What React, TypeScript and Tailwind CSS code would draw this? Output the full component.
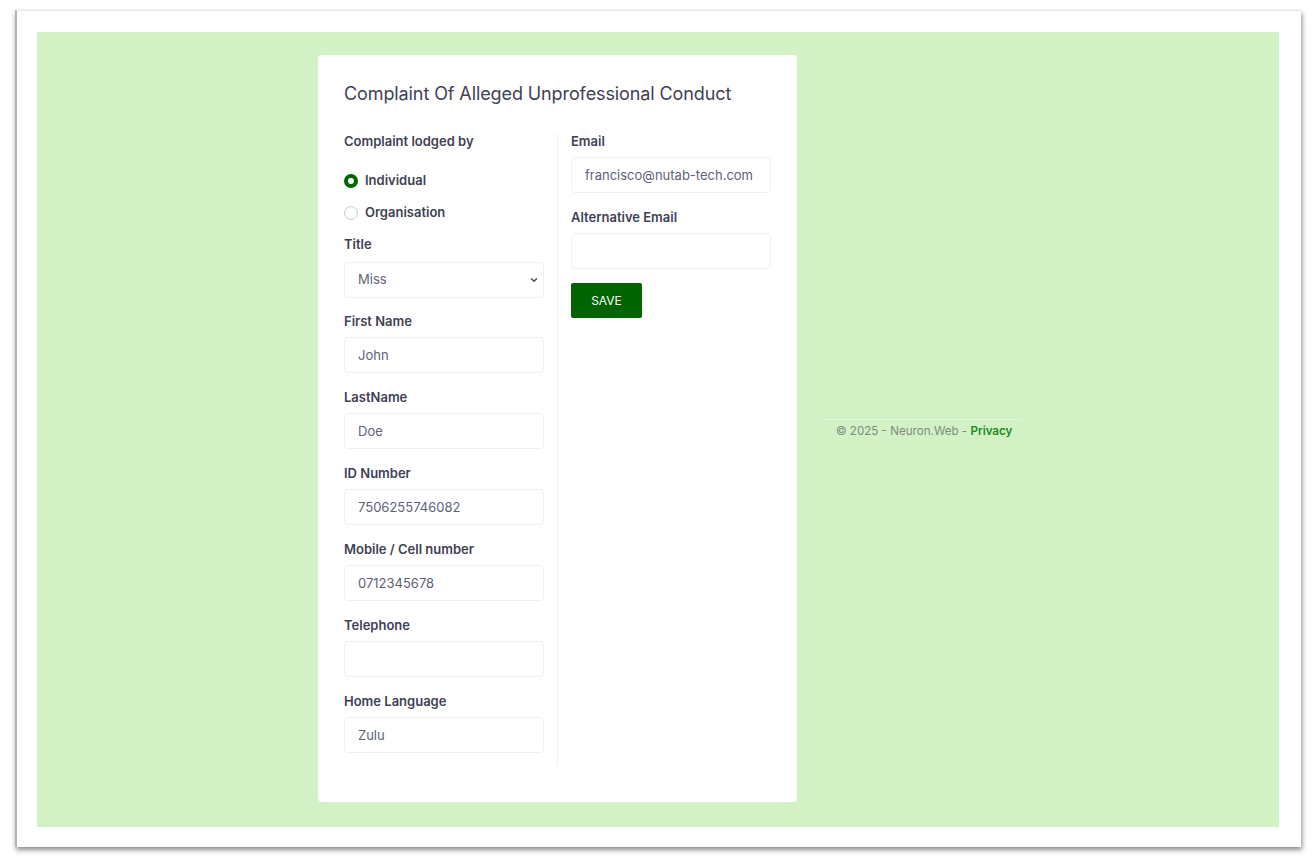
import React, { useState } from 'react';

const Field: React.FC<{ label: string; value?: string }> = ({ label, value = '' }) => (
  <div className="mb-4">
    <label className="block text-[13px] leading-[17px] font-semibold text-[#3f4254] mb-[7px]">{label}</label>
    <input
      type="text"
      defaultValue={value}
      className="w-full h-9 px-[13px] rounded-[4px] border border-[#eef0f6] bg-white text-[13px] text-[#5e6278] outline-none"
    />
  </div>
);

const Radio: React.FC<{ checked: boolean; label: string; onClick: () => void }> = ({ checked, label, onClick }) => (
  <button type="button" onClick={onClick} className="flex items-center gap-[7px] h-5">
    {checked ? (
      <span className="w-[14px] h-[14px] rounded-full border-[4px] border-[#006400] bg-white" />
    ) : (
      <span className="w-[14px] h-[14px] rounded-full border border-[#c9ccd4] bg-white" />
    )}
    <span className="text-[13px] font-semibold text-[#3f4254]">{label}</span>
  </button>
);

const App: React.FC = () => {
  const [lodgedBy, setLodgedBy] = useState<'individual' | 'organisation'>('individual');

  return (
    <div className="w-full h-[868px] bg-white pt-[10px] pl-[15px]" style={{ fontFamily: 'Inter, "Noto Sans", sans-serif' }}>
      {/* Screenshot frame */}
      <div className="w-[1286px] h-[837px] bg-white pl-[20px] pr-[21px] py-[21px] border-t border-[#e6e6e6] border-l-2 border-l-[#b5b5b5] shadow-[1px_3px_5px_rgba(0,0,0,0.45)]">
        <div className="w-[1242px] h-[795px] bg-[#d2f1c4] flex items-start pl-[281px] gap-[26px]">
          {/* Card */}
          <div className="mt-[23px] w-[479px] bg-white rounded-[4px] px-[26px] pt-[28px] pb-[37px]">
            <h1 className="text-[18px] leading-[22px] text-[#3f4254] font-normal tracking-[-0.1px]">
              Complaint Of Alleged Unprofessional Conduct
            </h1>

            <div className="flex mt-[28px]">
              {/* Left column */}
              <div className="w-[214px] pr-[13px] border-r border-[#eff2f5] pb-[12px]">
                <label className="block text-[13px] leading-[17px] font-semibold text-[#3f4254]">Complaint lodged by</label>
                <div className="mt-[21px] flex flex-col gap-3">
                  <Radio checked={lodgedBy === 'individual'} label="Individual" onClick={() => setLodgedBy('individual')} />
                  <Radio checked={lodgedBy === 'organisation'} label="Organisation" onClick={() => setLodgedBy('organisation')} />
                </div>

                <div className="mt-[13px] mb-[15px]">
                  <label className="block text-[13px] leading-[17px] font-semibold text-[#3f4254] mb-[9px]">Title</label>
                  <div className="relative">
                    <select
                      defaultValue="Miss"
                      className="w-full h-9 pl-[13px] pr-8 rounded-[4px] border border-[#eef0f6] bg-white text-[13px] text-[#5e6278] outline-none appearance-none"
                    >
                      <option>Mr</option>
                      <option>Mrs</option>
                      <option>Miss</option>
                      <option>Ms</option>
                      <option>Dr</option>
                    </select>
                    <svg className="absolute right-[5px] top-1/2 -translate-y-1/2 w-[10px] h-[10px] text-[#3f4254]" viewBox="0 0 16 16" fill="none" stroke="currentColor" strokeWidth="2" strokeLinecap="round" strokeLinejoin="round">
                      <path d="M4 6l4 4 4-4" />
                    </svg>
                  </div>
                </div>

                <Field label="First Name" value="John" />
                <Field label="LastName" value="Doe" />
                <Field label="ID Number" value="7506255746082" />
                <Field label="Mobile / Cell number" value="0712345678" />
                <Field label="Telephone" />
                <div>
                  <label className="block text-[13px] leading-[17px] font-semibold text-[#3f4254] mb-[7px]">Home Language</label>
                  <input
                    type="text"
                    defaultValue="Zulu"
                    className="w-full h-9 px-[13px] rounded-[4px] border border-[#eef0f6] bg-white text-[13px] text-[#5e6278] outline-none"
                  />
                </div>
              </div>

              {/* Right column */}
              <div className="w-[213px] pl-[13px]">
                <Field label="Email" value="francisco@nutab-tech.com" />
                <Field label="Alternative Email" />
                <button
                  type="button"
                  className="-mt-[2px] w-[71px] h-[35px] bg-[#006400] text-white text-[12px] font-normal rounded-[2px]"
                >
                  SAVE
                </button>
              </div>
            </div>
          </div>

          {/* Footer */}
          <div className="mt-[387px] w-[199px] border-t border-[#e2f6d8] pt-[2px] px-[13px] text-[11.6px] leading-[18px] whitespace-nowrap text-[#7e8c7e]">
            © 2025 - Neuron.Web - <a href="#" className="text-[#1d8a1d] font-semibold">Privacy</a>
          </div>
        </div>
      </div>
    </div>
  );
};

export default App;
